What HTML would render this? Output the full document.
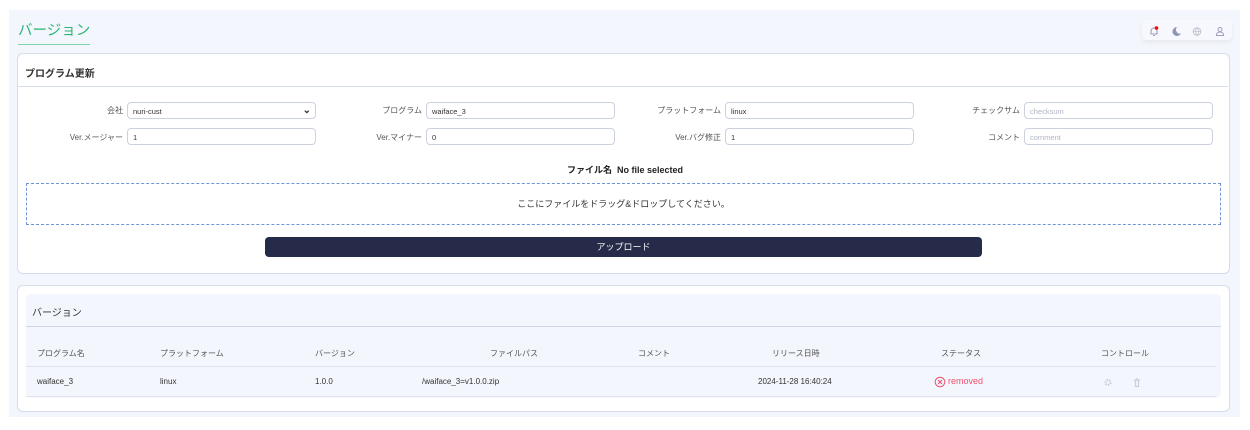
<!DOCTYPE html>
<html><head><meta charset="utf-8"><style>
body{margin:0;width:1250px;height:430px;background:#fff;font-family:"Liberation Sans","Noto Sans CJK JP",sans-serif;color:#333;position:relative;overflow:hidden}
.bg{position:absolute;left:9px;top:10px;width:1231px;height:407px;background:#f3f6fc}
.a{position:absolute}
.title{left:18px;top:19px;font-size:14.5px;color:#2bb673;padding-bottom:4px;border-bottom:1.5px solid #7fd3a8}
.card{background:#fff;border:1px solid #d6dcea;border-radius:6px}
.lbl{font-size:8px;color:#555;text-align:right;width:110px}
.in{height:17px;border:1px solid #ccd2dd;border-radius:4px;width:189px;font-size:7.5px;line-height:17px;padding-left:5px;box-sizing:border-box;background:#fff;color:#333}
.ph{color:#b0b6c3}
.th{font-size:8px;color:#555}
.td{font-size:8px;color:#333}
</style></head><body>
<div class="bg"></div>
<div class="a title">バージョン</div>
<div class="a" style="left:1142px;top:20px;width:90px;height:20px;background:#f6f8fd;border-radius:4px;box-shadow:0 2px 4px rgba(0,0,0,.06)"></div>
<svg class="a" style="left:1147px;top:24px" width="80" height="14" viewBox="0 0 80 14">
<path d="M4 10V7a3 3 0 016 0v3zM6 11.5h2" stroke="#9aa1b8" fill="none" stroke-width="1.1"/><circle cx="9.5" cy="4" r="1.8" fill="#f00"/>
<path d="M30 3a4.5 4.5 0 104 6.5A4 4 0 0130 3z" fill="#8f97b4"/>
<circle cx="50" cy="7.5" r="3.8" stroke="#c0c5d3" fill="none" stroke-width="1"/><path d="M46.2 7.5h7.6M50 3.7c-2 2-2 5.6 0 7.6c2-2 2-5.6 0-7.6" stroke="#c0c5d3" fill="none" stroke-width=".8"/>
<circle cx="73" cy="5.5" r="2" stroke="#9aa1b8" fill="none"/><path d="M69.5 11.5v-1a3.5 2.5 0 017 0v1z" stroke="#9aa1b8" fill="none"/>
</svg>

<div class="a card" style="left:17px;top:53px;width:1211px;height:219px"></div>
<div class="a" style="left:18px;top:86px;width:1210px;height:1px;background:#d6dcea"></div>
<div class="a" style="left:25px;top:65px;font-size:10px;font-weight:bold;color:#333">プログラム更新</div>

<div class="a lbl" style="left:13px;top:105px">会社</div>
<div class="a in" style="left:127px;top:102px">nuri-cust<span style="position:absolute;right:4px;top:-1px;font-size:10px;font-weight:bold">⌄</span></div>
<div class="a lbl" style="left:312px;top:105px">プログラム</div>
<div class="a in" style="left:426px;top:102px">waiface_3</div>
<div class="a lbl" style="left:611px;top:105px">プラットフォーム</div>
<div class="a in" style="left:725px;top:102px">linux</div>
<div class="a lbl" style="left:910px;top:105px">チェックサム</div>
<div class="a in ph" style="left:1024px;top:102px">checksum</div>

<div class="a lbl" style="left:13px;top:132px">Ver.メージャー</div>
<div class="a in" style="left:127px;top:128px">1</div>
<div class="a lbl" style="left:312px;top:132px">Ver.マイナー</div>
<div class="a in" style="left:426px;top:128px">0</div>
<div class="a lbl" style="left:611px;top:132px">Ver.バグ修正</div>
<div class="a in" style="left:725px;top:128px">1</div>
<div class="a lbl" style="left:910px;top:132px">コメント</div>
<div class="a in ph" style="left:1024px;top:128px">comment</div>

<div class="a" style="left:0;width:1250px;top:163px;text-align:center;font-size:9px;font-weight:bold;color:#222">ファイル名&nbsp; No file selected</div>
<div class="a" style="left:26px;top:183px;width:1195px;height:42px;border:1px dashed #6f95d8;box-sizing:border-box;text-align:center;line-height:40px;font-size:9px;color:#333">ここにファイルをドラッグ&amp;ドロップしてください。</div>
<div class="a" style="left:265px;top:237px;width:717px;height:20px;background:#252b48;border-radius:4px;color:#fff;font-size:9px;text-align:center;line-height:20px">アップロード</div>

<div class="a card" style="left:17px;top:285px;width:1211px;height:125px"></div>
<div class="a" style="left:26px;top:294px;width:1195px;height:104px;background:#f3f6fc;border-radius:5px"></div>
<div class="a" style="left:26px;top:326px;width:1195px;height:1px;background:#d0d6e4"></div>
<div class="a" style="left:32px;top:304px;font-size:10px;color:#333">バージョン</div>
<div class="a" style="left:26px;top:366px;width:1190px;height:1px;background:#dde2ec"></div>
<div class="a" style="left:26px;top:396px;width:1190px;height:1px;background:#dde2ec"></div>

<div class="a th" style="left:37px;top:348px">プログラム名</div>
<div class="a th" style="left:160px;top:348px">プラットフォーム</div>
<div class="a th" style="left:315px;top:348px">バージョン</div>
<div class="a th" style="left:490px;top:348px">ファイルパス</div>
<div class="a th" style="left:638px;top:348px">コメント</div>
<div class="a th" style="left:772px;top:348px">リリース日時</div>
<div class="a th" style="left:941px;top:348px">ステータス</div>
<div class="a th" style="left:1101px;top:348px">コントロール</div>

<div class="a td" style="left:37px;top:377px">waiface_3</div>
<div class="a td" style="left:160px;top:377px">linux</div>
<div class="a td" style="left:315px;top:377px">1.0.0</div>
<div class="a td" style="left:422px;top:377px">/waiface_3=v1.0.0.zip</div>
<div class="a td" style="left:758px;top:377px">2024-11-28 16:40:24</div>
<svg class="a" style="left:934px;top:376px" width="12" height="12"><circle cx="6" cy="6" r="4.8" stroke="#f0506e" fill="none"/><path d="M4 4l4 4M8 4l-4 4" stroke="#f0506e"/></svg>
<div class="a" style="left:948px;top:376px;font-size:9px;color:#f0506e">removed</div>
<svg class="a" style="left:1103px;top:377px" width="45" height="11">
<circle cx="5" cy="5.5" r="2.5" stroke="#c8cdd8" stroke-width="2" fill="none" stroke-dasharray="1.5 1"/>
<path d="M31 3h6M32.5 3v6.5h3V3M33 2h2" stroke="#c8cdd8" fill="none" stroke-width="1.2"/>
</svg>
</body></html>
